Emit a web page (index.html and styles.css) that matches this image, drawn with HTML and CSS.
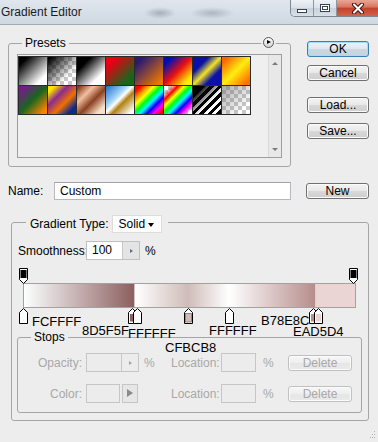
FILE: index.html
```html
<!DOCTYPE html>
<html lang="en">
<head>
  <meta charset="UTF-8">
  <title>Gradient Editor</title>
  <link rel="stylesheet" href="styles.css">
</head>
<body>
  <div class="titlebar">
    <span class="title">Gradient Editor</span>
    <div class="caption">
      <div class="cap"><span class="cap-min"></span></div>
      <div class="cap"><span class="cap-max"></span></div>
      <div class="cap close">
        <svg width="14" height="11" viewBox="0 0 14 11">
          <path d="M3 1.5 L11 9.5 M11 1.5 L3 9.5" stroke="#3a1a14" stroke-width="4" stroke-linecap="round"/>
          <path d="M3 1.5 L11 9.5 M11 1.5 L3 9.5" stroke="#fff" stroke-width="2" stroke-linecap="round"/>
        </svg>
      </div>
    </div>
  </div>

  <div class="top">
    <div class="presets-wrap">
      <fieldset class="group presets">
        <legend>Presets</legend>
        <div class="preset-list">
          <div class="swatches">
            <span class="sw sw1"></span>
            <span class="sw sw2"></span>
            <span class="sw sw3"></span>
            <span class="sw sw4"></span>
            <span class="sw sw5"></span>
            <span class="sw sw6"></span>
            <span class="sw sw7"></span>
            <span class="sw sw8"></span>
            <span class="sw sw9"></span>
            <span class="sw sw10"></span>
            <span class="sw sw11"></span>
            <span class="sw sw12"></span>
            <span class="sw sw13"></span>
            <span class="sw sw14"></span>
            <span class="sw sw15"></span>
            <span class="sw sw16"></span>
          </div>
          <div class="scrollbar">
            <span class="arrow-up"></span>
            <span class="arrow-down"></span>
          </div>
        </div>
      </fieldset>
      <span class="menu-btn"></span>
    </div>
    <div class="actions">
      <button class="btn default">OK</button>
      <button class="btn cancel">Cancel</button>
      <button class="btn load">Load...</button>
      <button class="btn save">Save...</button>
    </div>
  </div>

  <div class="name-row">
    <label class="name-label">Name:</label>
    <div class="name-input">Custom</div>
    <button class="btn new">New</button>
  </div>

  <fieldset class="group gradient-box">
    <legend>
      <span class="type-label">Gradient Type:</span>
      <span class="select">Solid<span class="caret"></span></span>
    </legend>

    <div class="smooth-row">
      <span class="smooth-label">Smoothness:</span>
      <span class="num-input"><span class="num-value">100</span><span class="stepper"><span class="tiny-arrow"></span></span></span>
      <span class="unit">%</span>
    </div>

    <div class="gradient">
      <div class="opacity-track">
        <svg class="stop" style="left:0px" width="11" height="16" viewBox="0 0 11 16"><path d="M1.5 0.5 H9.5 V11.5 L5.5 15.5 L1.5 11.5 Z" fill="#fff" stroke="#000"/><rect x="2.5" y="2" width="6" height="8" fill="#000"/></svg>
        <svg class="stop" style="left:330px" width="11" height="16" viewBox="0 0 11 16"><path d="M1.5 0.5 H9.5 V11.5 L5.5 15.5 L1.5 11.5 Z" fill="#fff" stroke="#000"/><rect x="2.5" y="2" width="6" height="8" fill="#000"/></svg>
      </div>
      <div class="bar"></div>
      <div class="color-track">
        <svg class="stop" style="left:0px" width="11" height="16" viewBox="0 0 11 16"><path d="M1.5 15.5 H9.5 V4.5 L5.5 0.5 L1.5 4.5 Z" fill="#fff" stroke="#000"/><rect x="3" y="6" width="5" height="7.5" fill="#FCFFFF"/></svg>
        <svg class="stop" style="left:109px" width="11" height="16" viewBox="0 0 11 16"><path d="M1.5 15.5 H9.5 V4.5 L5.5 0.5 L1.5 4.5 Z" fill="#fff" stroke="#000"/><rect x="3" y="6" width="5" height="7.5" fill="#8D5F5F"/></svg>
        <svg class="stop" style="left:114px" width="11" height="16" viewBox="0 0 11 16"><path d="M1.5 15.5 H9.5 V4.5 L5.5 0.5 L1.5 4.5 Z" fill="#fff" stroke="#000"/><rect x="3" y="6" width="5" height="7.5" fill="#FFFFFF"/></svg>
        <svg class="stop" style="left:165px" width="11" height="16" viewBox="0 0 11 16"><path d="M1.5 15.5 H9.5 V4.5 L5.5 0.5 L1.5 4.5 Z" fill="#fff" stroke="#000"/><rect x="2.5" y="5.5" width="6" height="8.5" fill="#CFBCB8" stroke="#555" stroke-width="0.6"/></svg>
        <svg class="stop" style="left:206px" width="11" height="16" viewBox="0 0 11 16"><path d="M1.5 15.5 H9.5 V4.5 L5.5 0.5 L1.5 4.5 Z" fill="#fff" stroke="#000"/><rect x="3" y="6" width="5" height="7.5" fill="#FFFFFF"/></svg>
        <svg class="stop" style="left:290px" width="11" height="16" viewBox="0 0 11 16"><path d="M1.5 15.5 H9.5 V4.5 L5.5 0.5 L1.5 4.5 Z" fill="#fff" stroke="#000"/><rect x="3" y="6" width="5" height="7.5" fill="#B78E8C"/></svg>
        <svg class="stop" style="left:295px" width="11" height="16" viewBox="0 0 11 16"><path d="M1.5 15.5 H9.5 V4.5 L5.5 0.5 L1.5 4.5 Z" fill="#fff" stroke="#000"/><rect x="3" y="6" width="5" height="7.5" fill="#EAD5D4"/></svg>
      </div>

      <span class="hex" style="left:9px;top:46px">FCFFFF</span>
      <span class="hex" style="left:59px;top:55px">8D5F5F</span>
      <span class="hex" style="left:105px;top:58px">FFFFFF</span>
      <span class="hex" style="left:142px;top:72px">CFBCB8</span>
      <span class="hex" style="left:186px;top:55px">FFFFFF</span>
      <span class="hex" style="left:238px;top:45px">B78E8C</span>
      <span class="hex" style="left:270px;top:56px">EAD5D4</span>
    </div>

    <fieldset class="group stops">
      <legend>Stops</legend>
      <div class="stops-grid">
        <span class="lbl">Opacity:</span>
        <span class="field num"><span class="stepper"><span class="tiny-arrow"></span></span></span>
        <span class="pct">%</span>
        <span class="loc">Location:</span>
        <span class="field loc-input"></span>
        <span class="pct2">%</span>
        <button class="btn delete" disabled>Delete</button>

        <span class="lbl">Color:</span>
        <span class="color-pick"><span class="field swatch"></span><span class="pick-btn"></span></span>
        <span></span>
        <span class="loc">Location:</span>
        <span class="field loc-input"></span>
        <span class="pct2">%</span>
        <button class="btn delete" disabled>Delete</button>
      </div>
    </fieldset>
  </fieldset>

  <svg class="grip" width="6" height="8" viewBox="0 0 6 8">
    <rect x="4" y="0" width="1" height="1" fill="#b0b0b0"/>
    <rect x="2" y="3" width="1" height="1" fill="#b0b0b0"/>
    <rect x="4" y="3" width="1" height="1" fill="#b0b0b0"/>
    <rect x="0" y="6" width="1" height="1" fill="#b0b0b0"/>
    <rect x="2" y="6" width="1" height="1" fill="#b0b0b0"/>
    <rect x="4" y="6" width="1" height="1" fill="#b0b0b0"/>
  </svg>
</body>
</html>
```

FILE: styles.css
```css
* {
  box-sizing: border-box;
}

body {
  margin: 0;
  width: 378px;
  height: 442px;
  overflow: hidden;
  position: relative;
  background: #ededed;
  font-family: "Liberation Sans", Arial, sans-serif;
  font-size: 12px;
  color: #000;
}

/* title bar */
.titlebar {
  height: 25px;
  display: flex;
  align-items: flex-start;
  border-bottom: 1px solid #a3abb4;
  background:
    radial-gradient(ellipse 16px 6px at 160px 13px, rgba(80, 90, 100, 0.35), transparent),
    radial-gradient(ellipse 22px 6px at 212px 13px, rgba(80, 90, 100, 0.3), transparent),
    linear-gradient(#dfe6ed, #cfd8e2);
}

.title {
  padding: 5px 0 0 1px;
  line-height: 14px;
  color: #1b1b1b;
}

.caption {
  margin-left: auto;
  display: flex;
  height: 17px;
  border: 1px solid #7d8792;
  border-top: 0;
  border-right: 0;
  border-radius: 0 0 0 5px;
  overflow: hidden;
}

.cap {
  width: 23px;
  display: flex;
  align-items: center;
  justify-content: center;
  border-right: 1px solid #8d97a2;
  background: linear-gradient(#eef2f6, #d9e1e9 50%, #c6d1db 50%, #d8e0e8);
}

.cap.close {
  width: 41px;
  border-right: 0;
  background: linear-gradient(#e9a695, #d8745f 45%, #c4402b 50%, #d2644c);
}

.cap-min {
  width: 10px;
  height: 4px;
  margin-top: 5px;
  background: #fff;
  border: 1px solid #39424c;
}

.cap-max {
  width: 10px;
  height: 8px;
  border: 1px solid #39424c;
  box-shadow: inset 0 0 0 1px #fff, inset 0 0 0 2px #39424c;
  background: #fff;
}

/* group boxes */
.group {
  margin: 0;
  border: 1px solid #a5a5a5;
  border-radius: 3px;
}

.group > legend {
  line-height: 14px;
  padding: 0 3px;
}

.top {
  display: flex;
  padding-left: 8px;
}

.presets-wrap {
  position: relative;
  margin-top: 11px;
}

.presets {
  width: 283px;
  padding: 4px 8px 8px;
}

.presets > legend {
  margin-left: 5px;
}

.menu-btn {
  position: absolute;
  right: 17px;
  top: 1px;
  width: 11px;
  height: 11px;
  border: 1px solid #5a5a5a;
  border-radius: 50%;
  background: linear-gradient(#ffffff, #d4d4d4);
  box-shadow: 0 0 0 2px #ededed;
}

.menu-btn::after {
  content: "";
  position: absolute;
  left: 3px;
  top: 2px;
  border-left: 4px solid #000;
  border-top: 2.5px solid transparent;
  border-bottom: 2.5px solid transparent;
}

.preset-list {
  height: 104px;
  display: flex;
  border: 1px solid #9e9e9e;
  background: #efefef;
}

.swatches {
  align-self: flex-start;
  margin-top: 1px;
  display: grid;
  grid-template-columns: repeat(8, 28px);
  grid-auto-rows: 28px;
  gap: 1px;
  border: 1px solid #2a2a2a;
  background: #2a2a2a;
}

.sw {
  display: block;
  --checker: repeating-conic-gradient(#c8c8c8 0 25%, #fff 0 50%) 0 0 / 8px 8px;
}

.sw1 { background: linear-gradient(135deg, #000 15%, #fff 80%); }
.sw2 { background: linear-gradient(135deg, #000 5%, rgba(0, 0, 0, 0) 70%), var(--checker); }
.sw3 { background: linear-gradient(135deg, #000 25%, #fff 75%); }
.sw4 { background: linear-gradient(135deg, #e80012 20%, #17661c 80%); }
.sw5 { background: linear-gradient(135deg, #2a1a70 15%, #f07800 90%); }
.sw6 { background: linear-gradient(135deg, #0010b0 15%, #ea1010 50%, #ffee00 85%); }
.sw7 { background: linear-gradient(135deg, #0a10a8 28%, #f2e224 50%, #0a10a8 72%); }
.sw8 { background: linear-gradient(135deg, #ff6400 10%, #ffee10 50%, #ff7000 90%); }
.sw9 { background: linear-gradient(135deg, #761a8e 10%, #19661e 50%, #ff8200 90%); }
.sw10 { background: linear-gradient(135deg, #ffe200 12%, #8a2a90 35%, #f07000 60%, #0c2a90 85%); }
.sw11 { background: linear-gradient(135deg, #8a3a18 5%, #f0c0a0 30%, #8a4020 55%, #f8e0c8 85%); }
.sw12 { background: linear-gradient(135deg, #1a70c8 0%, #a8d8f8 38%, #fff 48%, #b08010 60%, #fff 92%); }
.sw13 { background: linear-gradient(135deg, #f00 10%, #f80 22%, #ff0 34%, #0f0 46%, #0ff 58%, #00f 70%, #f0f 82%, #f00 94%); }
.sw14 { background: linear-gradient(135deg, rgba(255, 0, 0, 0) 12%, #f00 25%, #ff0 36%, #0f0 47%, #0ff 58%, #00f 69%, #f0f 80%, rgba(255, 0, 255, 0) 92%), var(--checker); }
.sw15 { background: linear-gradient(135deg, #000 15%, rgba(0, 0, 0, 0) 60%), repeating-linear-gradient(135deg, #000 0 3px, #fff 3px 6px); }
.sw16 { background: linear-gradient(135deg, rgba(110, 110, 110, 0.6), rgba(110, 110, 110, 0) 80%), var(--checker); }

.scrollbar {
  margin-left: auto;
  width: 13px;
  border-left: 1px solid #dadada;
  background: #e8e8e8;
  display: flex;
  flex-direction: column;
  justify-content: space-between;
  align-items: center;
  padding: 7px 0 6px;
}

.arrow-up {
  border-bottom: 3px solid #7a7a7a;
  border-left: 3px solid transparent;
  border-right: 3px solid transparent;
}

.arrow-down {
  border-top: 3px solid #7a7a7a;
  border-left: 3px solid transparent;
  border-right: 3px solid transparent;
}

/* buttons */
.actions {
  margin-left: 16px;
  padding-top: 16px;
  width: 62px;
  display: flex;
  flex-direction: column;
}

.btn {
  height: 16px;
  padding: 0;
  border: 1px solid #707070;
  border-radius: 3px;
  background: linear-gradient(#f4f4f4, #e8e8e8 50%, #d8d8d8 50%, #cfcfcf);
  box-shadow: inset 0 0 0 1px #fbfbfb;
  font-family: "Liberation Sans", Arial, sans-serif;
  font-size: 12px;
  line-height: 14px;
  color: #000;
}

.btn.default {
  border-color: #3c7fb1;
  box-shadow: inset 0 0 0 1px #a6dcf7;
  background: linear-gradient(#edf4f8, #dde7ee 50%, #ccd8e0 50%, #c7d3dc);
}

.cancel { margin-top: 8px; }
.load { margin-top: 16px; }
.save { margin-top: 10px; }

/* name row */
.name-row {
  display: flex;
  align-items: center;
  height: 18px;
  margin-top: 15px;
  padding-left: 8px;
}

.name-label {
  width: 46px;
}

.name-input {
  width: 237px;
  height: 18px;
  padding-left: 5px;
  line-height: 16px;
  border: 1px solid #b6b8bd;
  border-top-color: #a0a2a8;
  background: #fff;
}

.btn.new {
  width: 63px;
  margin-left: 15px;
}

/* gradient group */
.gradient-box {
  width: 358px;
  margin: 15px 0 0 11px;
  padding: 12px 5px 7px 6px;
}

.gradient-box > legend {
  display: flex;
  align-items: flex-start;
  margin-left: 8px;
  padding: 0 6px 0 4px;
}

.type-label {
  line-height: 18px;
  margin-bottom: -4px;
}

.select {
  position: relative;
  width: 50px;
  height: 18px;
  margin: 0 0 -4px 3px;
  padding-left: 6px;
  line-height: 17px;
  background: #fff;
  border: 1px solid #dcdcdc;
}

.caret {
  position: absolute;
  right: 7px;
  top: 7px;
  border-top: 4px solid #000;
  border-left: 3.5px solid transparent;
  border-right: 3.5px solid transparent;
}

.smooth-row {
  display: flex;
  align-items: center;
  height: 19px;
}

.smooth-label {
  width: 68px;
}

.num-input {
  display: flex;
  width: 54px;
  height: 19px;
  border: 1px solid #c0c0c0;
  background: #fff;
}

.num-value {
  width: 35px;
  padding-left: 5px;
  line-height: 17px;
}

.stepper {
  flex: 1;
  display: flex;
  align-items: center;
  justify-content: center;
  border-left: 1px solid #c8c8c8;
  background: #e4e4e4;
}

.tiny-arrow {
  border-left: 3px solid #5a6e8a;
  border-top: 2px solid transparent;
  border-bottom: 2px solid transparent;
}

.unit {
  margin-left: 5px;
}

.gradient {
  position: relative;
  width: 333px;
  margin: 8px 0 0 5px;
}

.opacity-track,
.color-track {
  position: relative;
  height: 16px;
}

.opacity-track {
  height: 15px;
}

.stop {
  position: absolute;
  top: 0;
  margin-left: -5px;
}

.bar {
  height: 25px;
  border: 1px solid #a2a2a2;
  background: linear-gradient(to right,
    #FCFFFF 0%, #8D5F5F 33.2%, #FFFFFF 33.5%, #CFBCB8 49.5%,
    #FFFFFF 61.9%, #B78E8C 87.8%, #EAD5D4 88.1%, #EAD5D4 100%);
}

.hex {
  position: absolute;
  z-index: 2;
  font-size: 13px;
  line-height: 15px;
  color: #000;
  white-space: nowrap;
}

/* stops group */
.stops {
  width: 345px;
  margin: 6px 0 0 -1px;
  padding: 9px 0 9px 0;
  color: #a8a8a8;
}

.stops > legend {
  margin-left: 13px;
  color: #000;
}

.stops-grid {
  display: grid;
  grid-template-columns: 68px 53px 32px 50px 35px 32px 64px;
  grid-auto-rows: 19px;
  row-gap: 12px;
  align-items: center;
}

.lbl {
  text-align: right;
  padding-right: 4px;
}

.field {
  height: 19px;
  border: 1px solid #c6c6c6;
  background: #ececec;
}

.field.num {
  display: flex;
  justify-content: flex-end;
}

.field.num .stepper {
  flex: 0 0 17px;
  background: #ececec;
}

.field.num .tiny-arrow {
  border-left-color: #9aa4b0;
}

.pct {
  padding-left: 5px;
}

.pct2 {
  padding-left: 7px;
}

.color-pick {
  display: flex;
  height: 19px;
}

.field.swatch {
  width: 34px;
}

.pick-btn {
  position: relative;
  width: 16px;
  margin-left: 2px;
  border: 1px solid #c6c6c6;
  background: #e6e6e6;
}

.pick-btn::after {
  content: "";
  position: absolute;
  left: 4px;
  top: 4px;
  border-left: 6px solid #8a8a8a;
  border-top: 4.5px solid transparent;
  border-bottom: 4.5px solid transparent;
}

.btn.delete {
  width: 64px;
  border-color: #c0c0c0;
  background: linear-gradient(#f7f7f7, #eeeeee 50%, #e6e6e6 50%, #e9e9e9);
  color: #a8a8a8;
}

.grip {
  position: absolute;
  right: 2px;
  bottom: 3px;
}
```
